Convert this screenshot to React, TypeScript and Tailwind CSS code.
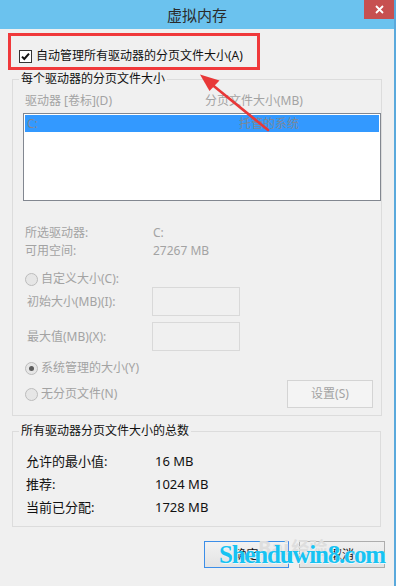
import React from "react";

const font = { fontFamily: '"Noto Sans", "Noto Sans CJK SC", sans-serif' };

function Radio({ checked = false }: { checked?: boolean }) {
  return (
    <span className="flex h-[13px] w-[13px] shrink-0 items-center justify-center rounded-full border border-[#bcbcbc] bg-[#e6e6e6]">
      {checked ? <span className="h-[5px] w-[5px] rounded-full bg-[#5c5c5c]" /> : null}
    </span>
  );
}

function CheckBox() {
  return (
    <span className="flex h-[13px] w-[13px] shrink-0 items-center justify-center border border-[#333] bg-white">
      <svg aria-hidden="true" className="h-[11px] w-[11px]" viewBox="0 0 11 11">
        <path d="M2 5.6 4.3 8 9 2.6" fill="none" stroke="#111" strokeWidth="2" />
      </svg>
    </span>
  );
}

function InfoRow({ label, value }: { label: string; value: string }) {
  return (
    <div className="flex h-[18px] items-center text-[#a3a3a3]">
      <span className="w-[140px] pl-[12px]">{label}</span>
      <span>{value}</span>
    </div>
  );
}

export default function App() {
  return (
    <div
      className="relative h-[586px] w-[396px] overflow-hidden border-r-2 border-[#5aa9dc] bg-[#f0f0f0] text-[12px] leading-[16px]"
      style={font}
    >
      {/* title bar */}
      <div className="relative flex h-[29px] items-center justify-center bg-[#6bc2ee] text-[15px] text-[#2a2a2a]">
        虚拟内存
        <div className="absolute right-0 top-0 flex h-[19px] w-[30px] items-center justify-center bg-[#c75050]">
          <svg aria-hidden="true" className="h-[9px] w-[9px]" viewBox="0 0 9 9">
            <path d="M1 1 8 8M8 1 1 8" stroke="#fff" strokeWidth="1.8" />
          </svg>
        </div>
      </div>

      <div className="mt-[19px] flex h-[16px] items-center gap-[4px] pl-[19px] text-[#111]">
        <CheckBox />
        <span>自动管理所有驱动器的分页文件大小(A)</span>
      </div>

      <fieldset className="ml-[12px] mt-[7px] w-[369px] border border-[#dcdcdc] pb-[7px]">
        <legend className="ml-[6px] px-[2px] text-[#111]">每个驱动器的分页文件大小</legend>
        <div className="mt-[6px] flex h-[16px] items-center text-[#a3a3a3]">
          <span className="w-[192px] pl-[12px]">驱动器 [卷标](D)</span>
          <span>分页文件大小(MB)</span>
        </div>
        <div className="ml-[10px] mt-[4px] h-[88px] w-[358px] border border-[#828790] bg-white p-[1px]">
          <div className="flex h-[17px] items-center bg-[#3399ff] text-[#7c8898]">
            <span className="w-[214px] pl-[2px]">C:</span>
            <span>托管的系统</span>
          </div>
        </div>

        <div className="mt-[23px]">
          <InfoRow label="所选驱动器:" value="C:" />
          <InfoRow label="可用空间:" value="27267 MB" />
        </div>

        <div className="mt-[11px] flex h-[16px] items-center gap-[3px] pl-[12px] text-[#a3a3a3]">
          <Radio />
          <span>自定义大小(C):</span>
        </div>
        <div className="flex h-[29px] items-center text-[#a3a3a3]">
          <span className="w-[139px] pl-[14px]">初始大小(MB)(I):</span>
          <span className="h-[29px] w-[88px] border border-[#d9d9d9] bg-[#f0f0f0]" />
        </div>
        <div className="mt-[6px] flex h-[29px] items-center text-[#a3a3a3]">
          <span className="w-[139px] pl-[14px]">最大值(MB)(X):</span>
          <span className="h-[29px] w-[88px] border border-[#d9d9d9] bg-[#f0f0f0]" />
        </div>
        <div className="mt-[9px] flex h-[16px] items-center gap-[3px] pl-[12px] text-[#a3a3a3]">
          <Radio checked />
          <span>系统管理的大小(Y)</span>
        </div>
        <div className="mt-[4px] flex h-[28px] items-center gap-[3px] pl-[12px] pr-[8px] text-[#a3a3a3]">
          <Radio />
          <span>无分页文件(N)</span>
          <span className="ml-auto flex h-[28px] w-[86px] items-center justify-center border border-[#d4d4d4] bg-[#f4f4f4]">
            设置(S)
          </span>
        </div>
      </fieldset>

      <fieldset className="ml-[12px] mt-[7px] w-[369px] border border-[#dcdcdc] pb-[8px]">
        <legend className="ml-[6px] px-[2px] text-[#111]">所有驱动器分页文件大小的总数</legend>
        <div className="mt-[10px]">
          {[
            ["允许的最小值:", "16 MB"],
            ["推荐:", "1024 MB"],
            ["当前已分配:", "1728 MB"],
          ].map(([label, value]) => (
            <div className="flex h-[23px] items-center text-[13px] text-[#111]" key={label}>
              <span className="w-[142px] pl-[13px]">{label}</span>
              <span>{value}</span>
            </div>
          ))}
        </div>
      </fieldset>

      <div className="mt-[14px] flex justify-end gap-[10px] pr-[9px] text-[#111]">
        <span className="flex h-[27px] w-[85px] items-center justify-center border border-[#3c8ee8] bg-gradient-to-b from-[#f2f2f2] to-[#e3e3e3]">
          确定
        </span>
        <span className="flex h-[27px] w-[86px] items-center justify-center border border-[#adadad] bg-gradient-to-b from-[#f0f0f0] to-[#e3e3e3]">
          取消
        </span>
      </div>

      {/* annotation: red frame and arrow */}
      <div className="pointer-events-none absolute left-[8px] top-[33px] h-[37px] w-[252px] border-[3px] border-[#f0393b]" />
      <svg
        aria-hidden="true"
        className="pointer-events-none absolute left-0 top-0"
        height="586"
        viewBox="0 0 396 586"
        width="396"
      >
        <path d="M268 130 210 83" stroke="#e83838" strokeLinecap="round" strokeWidth="2.6" />
        <path d="M200 74.5 219.5 80.5 209.5 91Z" fill="#e83838" />
      </svg>

      {/* watermarks */}
      <div className="pointer-events-none absolute left-[258px] top-[540px] flex items-center gap-[2px] text-[20px] font-bold text-[#dedede]">
        <span>Bai</span>
        <span className="text-[18px]">经验</span>
      </div>
      <div
        className="pointer-events-none absolute left-[219px] top-[538px] text-[25px] font-bold leading-[34px] tracking-[-1.2px] text-[#17c3f2]"
        style={{
          fontFamily: '"Liberation Serif", serif',
          textShadow: "1px 1px 0 #e8f8ff",
        }}
      >
        Shenduwin8.com
      </div>
    </div>
  );
}
